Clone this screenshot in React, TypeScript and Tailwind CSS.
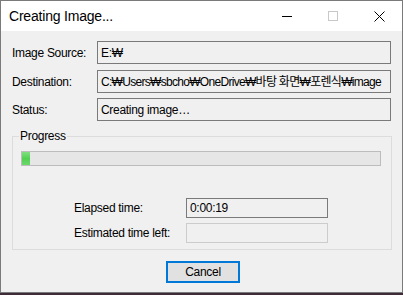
const font = { fontFamily: '"Liberation Sans", "Noto Sans CJK KR", sans-serif' };

const Field = ({ label, value, tight }: { label: string; value: string; tight?: boolean }) => (
  <div className="flex items-center h-[23px] pl-[11px]">
    <div className="w-[85px] text-[12px] tracking-[-0.3px] text-black">{label}</div>
    <div
      className={
        'w-[294px] h-[23px] border border-[#7a7a7a] bg-[#f0f0f0] flex items-center pl-[3px] overflow-hidden whitespace-nowrap text-[12px] text-black ' +
        (tight ? 'tracking-[-0.7px]' : 'tracking-[-0.3px]')
      }
    >
      {value}
    </div>
  </div>
);

const App = () => {
  return (
    <div className="w-[403px] h-[295px] bg-[#3b2c37] flex flex-col" style={font}>
      <div className="w-[403px] h-[293px] border border-[#7a7a7a] flex flex-col">
        {/* title bar */}
        <div className="h-[30px] bg-white flex items-center">
          <div className="flex-1 pl-[8px] text-[14px] tracking-[-0.2px] text-black">Creating Image...</div>
          <div className="w-[46px] h-[30px] flex items-center justify-center">
            <svg width="10" height="10" viewBox="0 0 10 10">
              <line x1="0" y1="5.5" x2="10" y2="5.5" stroke="#000" strokeWidth="1" />
            </svg>
          </div>
          <div className="w-[46px] h-[30px] flex items-center justify-center">
            <svg width="10" height="10" viewBox="0 0 10 10">
              <rect x="0.5" y="0.5" width="9" height="9" fill="none" stroke="#c8c8c8" strokeWidth="1" />
            </svg>
          </div>
          <div className="w-[46px] h-[30px] flex items-center justify-center">
            <svg width="11" height="11" viewBox="0 0 11 11">
              <path d="M0.5 0.5 L10.5 10.5 M10.5 0.5 L0.5 10.5" stroke="#000" strokeWidth="1" />
            </svg>
          </div>
        </div>

        {/* body */}
        <div className="flex-1 bg-[#f0f0f0] flex flex-col pt-[10px]">
          <Field label="Image Source:" value="E:₩" />
          <div className="mt-[6px]">
            <Field label="Destination:" value="C:₩Users₩sbcho₩OneDrive₩바탕 화면₩포렌식₩image" tight />
          </div>
          <div className="mt-[5px]">
            <Field label="Status:" value="Creating image…" />
          </div>

          {/* progress group */}
          <div className="relative ml-[11px] mt-[15px] w-[380px] h-[114px] border border-[#dcdcdc] flex flex-col pl-[8px] pt-[14px]">
            <span className="absolute left-[6px] -top-[8px] px-[1px] bg-[#f0f0f0] text-[12px] leading-[14px] tracking-[-0.3px] text-black">
              Progress
            </span>
            <div className="w-[360px] h-[15px] border border-[#bcbcbc] bg-[#e6e6e6] flex">
              <div className="w-[8px] h-full bg-gradient-to-b from-[#7fe07f] via-[#52d052] to-[#6bd86b]" />
            </div>
            <div className="flex items-center mt-[32px] pl-[53px]">
              <div className="w-[112px] text-[12px] tracking-[-0.3px] text-black">Elapsed time:</div>
              <div className="w-[142px] h-[20px] border border-[#7a7a7a] flex items-center pl-[3px] text-[12px] tracking-[-0.3px] text-black">
                0:00:19
              </div>
            </div>
            <div className="flex items-center mt-[5px] pl-[53px]">
              <div className="w-[112px] text-[12px] tracking-[-0.3px] text-black">Estimated time left:</div>
              <div className="w-[142px] h-[20px] border border-[#cccccc]" />
            </div>
          </div>

          <div className="mt-[11px] ml-[165px]">
            <button className="w-[74px] h-[22px] border-2 border-[#0078d7] bg-[#e1e1e1] flex items-center justify-center text-[12px] tracking-[-0.3px] text-black">
              Cancel
            </button>
          </div>
        </div>
      </div>
    </div>
  );
};

export default App;
